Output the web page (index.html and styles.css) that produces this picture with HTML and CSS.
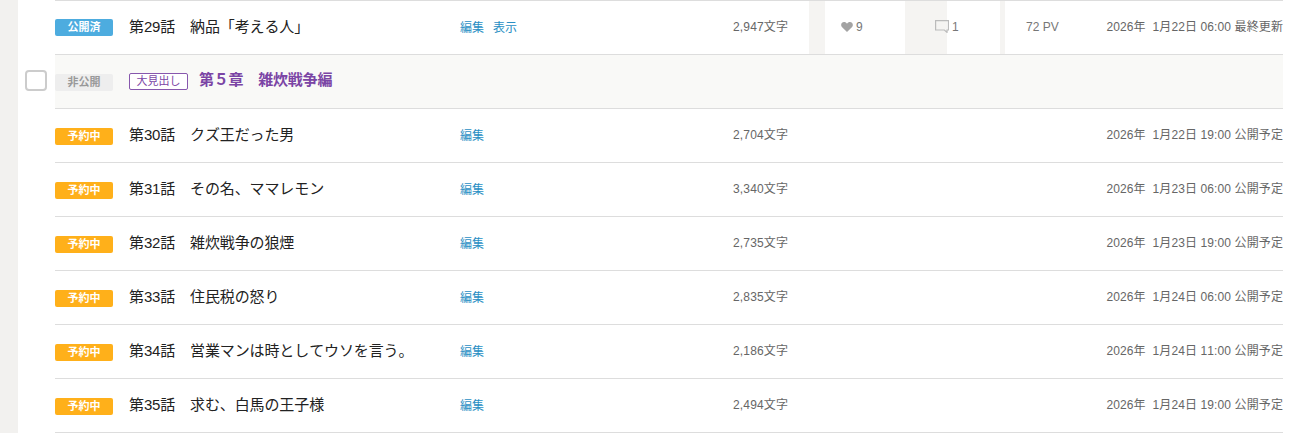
FILE: index.html
```html
<!DOCTYPE html>
<html lang="ja">
<head>
    <meta charset="UTF-8">
    <title>エピソード管理</title>
    <link rel="stylesheet" href="styles.css">
</head>
<body>
    <div class="side"></div>
    <div class="check-col">
        <span class="check"></span>
    </div>
    <div class="list">
        <div class="row">
            <span class="status published">公開済</span>
            <span class="title">第29話　納品「考える人」</span>
            <span class="links"><a>編集</a><a>表示</a></span>
            <span class="count">2,947文字</span>
            <div class="stats">
                <span class="stat likes">
                    <svg width="12" height="10" viewBox="0 0 12 10"><path d="M6 10 .9 5C-.6 3.300.2 0 3 0c1.300 0 2.400.7 3 1.700C6.600.7 7.700 0 9 0c2.800 0 3.600 3.300 2.100 5z" fill="#a3a3a3"/></svg>9
                </span>
                <span class="stat comments">
                    <svg width="14" height="13" viewBox="0 0 14 13"><path d="M.6.6h12.800v9.400h-1.400v2.400L9.400 10H.6z" fill="none" stroke="#bbbbbb" stroke-width="1.200"/></svg>1
                </span>
                <span class="stat pv">72 PV</span>
            </div>
            <span class="date">2026年&nbsp; 1月22日 06:00 最終更新</span>
        </div>
        <div class="row chapter">
            <span class="status private">非公開</span>
            <span class="heading-tag">大見出し</span>
            <span class="chapter-name">第５章　雑炊戦争編</span>
        </div>
        <div class="row">
            <span class="status reserved">予約中</span>
            <span class="title">第30話　クズ王だった男</span>
            <span class="links"><a>編集</a></span>
            <span class="count">2,704文字</span>
            <span class="date">2026年&nbsp; 1月22日 19:00 公開予定</span>
        </div>
        <div class="row">
            <span class="status reserved">予約中</span>
            <span class="title">第31話　その名、ママレモン</span>
            <span class="links"><a>編集</a></span>
            <span class="count">3,340文字</span>
            <span class="date">2026年&nbsp; 1月23日 06:00 公開予定</span>
        </div>
        <div class="row">
            <span class="status reserved">予約中</span>
            <span class="title">第32話　雑炊戦争の狼煙</span>
            <span class="links"><a>編集</a></span>
            <span class="count">2,735文字</span>
            <span class="date">2026年&nbsp; 1月23日 19:00 公開予定</span>
        </div>
        <div class="row">
            <span class="status reserved">予約中</span>
            <span class="title">第33話　住民税の怒り</span>
            <span class="links"><a>編集</a></span>
            <span class="count">2,835文字</span>
            <span class="date">2026年&nbsp; 1月24日 06:00 公開予定</span>
        </div>
        <div class="row">
            <span class="status reserved">予約中</span>
            <span class="title">第34話　営業マンは時としてウソを言う。</span>
            <span class="links"><a>編集</a></span>
            <span class="count">2,186文字</span>
            <span class="date">2026年&nbsp; 1月24日 11:00 公開予定</span>
        </div>
        <div class="row">
            <span class="status reserved">予約中</span>
            <span class="title">第35話　求む、白馬の王子様</span>
            <span class="links"><a>編集</a></span>
            <span class="count">2,494文字</span>
            <span class="date">2026年&nbsp; 1月24日 19:00 公開予定</span>
        </div>
    </div>
</body>
</html>
```

FILE: styles.css
```css
/* Global Styles */
html, body {
    height: 433px;
    overflow: hidden;
}

body {
    display: flex;
    margin: 0;
    background-color: #ffffff;
    font-family: "Liberation Sans", "Noto Sans CJK JP", sans-serif;
    font-kerning: none;
    color: #333333;
}

.side {
    width: 18px;
    flex-shrink: 0;
    background-color: #f2f1ef;
}

.check-col {
    width: 37px;
    flex-shrink: 0;
    padding: 70px 0 0 7px;
    box-sizing: border-box;
}

.check {
    display: block;
    width: 22px;
    height: 21px;
    background: #ffffff;
    border: 2px solid #cccccc;
    border-radius: 4px;
    box-sizing: border-box;
}

/* Episode rows */
.list {
    width: 1228px;
    flex-shrink: 0;
    border-top: 1px solid #dddddd;
}

.row {
    display: flex;
    align-items: center;
    height: 53px;
    border-bottom: 1px solid #dddddd;
}

.row.chapter {
    background-color: #f9f9f7;
}

.status {
    width: 58px;
    height: 17px;
    line-height: 17px;
    margin-right: 16px;
    flex-shrink: 0;
    border-radius: 2px;
    text-align: center;
    font-size: 11px;
    font-weight: bold;
    color: #ffffff;
}

.published {
    background-color: #4dacdf;
}

.private {
    margin-top: 2px;
    background-color: #eeeeee;
    color: #999999;
}

.reserved {
    margin-top: 2px;
    background-color: #ffb01a;
}

.title {
    width: 331px;
    margin-bottom: 4px;
    flex-shrink: 0;
    font-size: 15px;
    letter-spacing: -0.12px;
    color: #222222;
}

.links {
    display: flex;
    gap: 9px;
    width: 273px;
    margin-bottom: 2px;
    flex-shrink: 0;
    font-size: 12px;
    color: #2a8fc4;
}

.count {
    width: 76px;
    margin-bottom: 4px;
    flex-shrink: 0;
    font-size: 12px;
    letter-spacing: 0.15px;
    color: #666666;
}

.date {
    margin-left: auto;
    margin-bottom: 4px;
    font-size: 12px;
    letter-spacing: 0.11px;
    color: #666666;
    white-space: nowrap;
}

/* Like, comment and PV cells */
.stats {
    display: flex;
    align-self: stretch;
    flex-shrink: 0;
    font-size: 12px;
    color: #777777;
}

.stat {
    display: flex;
    align-items: center;
    gap: 3px;
    padding-bottom: 2px;
}

.likes {
    width: 96px;
    padding-left: 16px;
    box-sizing: border-box;
    border-left: 16px solid #f5f4f2;
}

.comments {
    width: 95px;
    padding-left: 30px;
    box-sizing: border-box;
    background: linear-gradient(to right, #f5f4f2 42px, #ffffff 42px);
}

.pv {
    padding-left: 21px;
    border-left: 5px solid #f5f4f2;
    white-space: nowrap;
}

/* Chapter heading */
.heading-tag {
    width: 59px;
    height: 17px;
    line-height: 15px;
    margin-right: 11px;
    flex-shrink: 0;
    box-sizing: border-box;
    border: 1px solid #8757ad;
    border-radius: 2px;
    background: #ffffff;
    text-align: center;
    font-size: 11px;
    color: #7b45a5;
}

.chapter-name {
    margin-bottom: 6px;
    font-size: 15px;
    font-weight: bold;
    letter-spacing: -0.2px;
    color: #7b45a5;
}
```
